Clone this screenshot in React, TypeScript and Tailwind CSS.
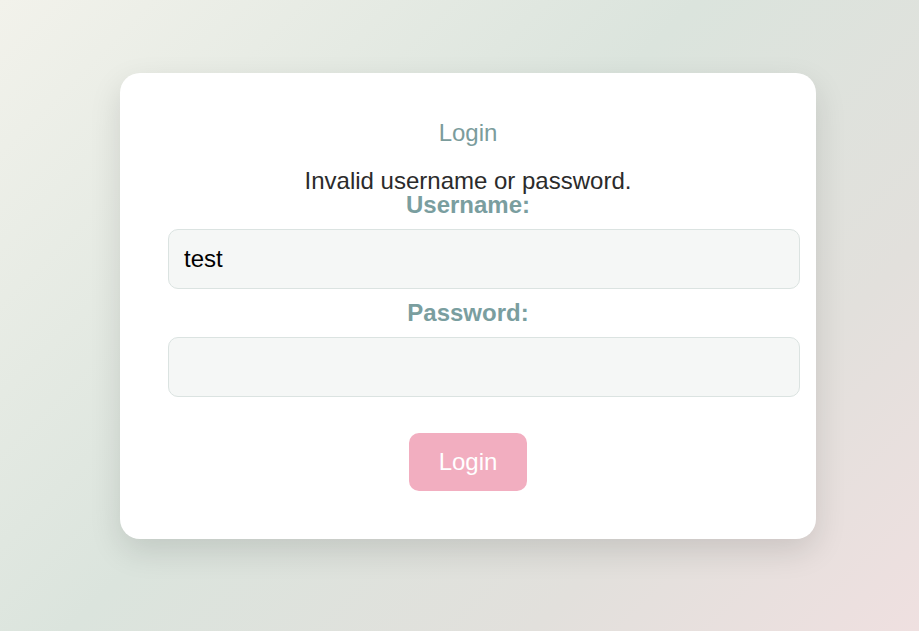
import React from "react";

export default function App() {
  return (
    <div
      className="min-h-[631px] w-full bg-[linear-gradient(135deg,#f2f2eb_0%,#dbe4dd_45%,#e2e0dc_75%,#efe0e0_100%)] pt-[73px]"
      style={{ fontFamily: '"Liberation Sans", Arial, sans-serif' }}
    >
      <div className="ml-[120px] w-[696px] rounded-[20px] bg-white px-[48px] pt-[48px] pb-[48px] shadow-[0_12px_32px_rgba(0,0,0,0.12)]">
        <div className="flex h-[24px] items-center justify-center text-[24px] leading-[24px] text-[#7b9c9c]">
          Login
        </div>
        <div className="mt-[24px] flex h-[24px] items-center justify-center text-[24px] leading-[24px] text-[#2b2b2b]">
          Invalid username or password.
        </div>
        <div className="flex h-[24px] items-center justify-center text-[24px] font-bold leading-[24px] text-[#7a9e9f]">
          Username:
        </div>
        <div className="mt-[12px] flex h-[60px] w-[632px] items-center rounded-[10px] border border-[#dbe3e1] bg-[#f5f7f6] px-[15px] text-[24px] text-black">
          test
        </div>
        <div className="mt-[12px] flex h-[24px] items-center justify-center text-[24px] font-bold leading-[24px] text-[#7a9e9f]">
          Password:
        </div>
        <div className="mt-[12px] h-[60px] w-[632px] rounded-[10px] border border-[#dbe3e1] bg-[#f5f7f6]" />
        <div className="mt-[36px] flex justify-center">
          <div className="flex h-[58px] w-[118px] items-center justify-center rounded-[10px] bg-[#f2aec0] text-[24px] text-white">
            Login
          </div>
        </div>
      </div>
    </div>
  );
}
